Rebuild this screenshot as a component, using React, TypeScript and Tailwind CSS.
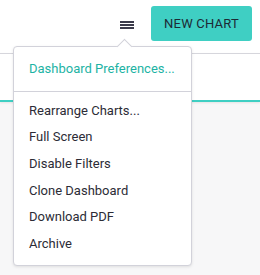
import React from 'react'

const items = ['Rearrange Charts...', 'Full Screen', 'Disable Filters', 'Clone Dashboard', 'Download PDF', 'Archive']

const App = () => {
  return (
    <div className="relative w-[260px] h-[275px] bg-[#f7f7f8] overflow-hidden font-['Roboto',sans-serif]">
      <div className="h-[53px] bg-white flex items-start justify-end pr-[8px] pt-[6px]">
        <button className="mr-[17px] mt-[15px] flex flex-col gap-[1px] w-[14px]">
          <span className="block h-[2px] bg-[#3b3b4b]" />
          <span className="block h-[2px] bg-[#3b3b4b]" />
          <span className="block h-[2px] bg-[#3b3b4b]" />
        </button>
        <button className="w-[101px] h-[35px] rounded-[3px] bg-[#3fcfc3] text-[13px] text-[#1d2a35] tracking-[0.2px]">
          NEW CHART
        </button>
      </div>
      <div className="h-[49px] bg-white border-t border-[#d6d6dc] border-b-2 border-b-[#3fcfc3] shadow-[0_1px_2px_rgba(0,0,0,0.08)]" />

      {/* menu */}
      <div className="absolute left-[13px] top-[46px] w-[179px] h-[220px] bg-white border border-[#d2d2da] rounded-[4px] shadow-[0_1px_3px_rgba(0,0,0,0.1)]">
        <div className="absolute -top-[6px] left-[105px] w-[11px] h-[11px] bg-white border-l border-t border-[#d2d2da] rotate-45" />
        <div className="relative h-[45px] flex items-center pl-[15px] text-[13px] text-[#1db3a4] border-b border-[#d2d2da]">
          Dashboard Preferences...
        </div>
        <div className="pt-[5px]">
          {items.map((t) => (
            <div key={t} className="h-[26.7px] flex items-center pl-[15px] text-[13px] text-[#2c2c36]">
              {t}
            </div>
          ))}
        </div>
      </div>
    </div>
  )
}

export default App
